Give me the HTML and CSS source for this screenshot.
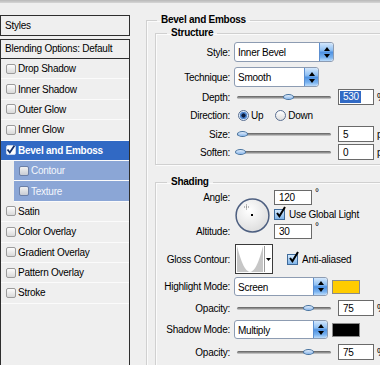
FILE: index.html
```html
<!DOCTYPE html>
<html lang="en">
<head>
  <meta charset="UTF-8">
  <title>Layer Style</title>
  <link rel="stylesheet" href="styles.css">
</head>
<body>
  <div class="topbar"></div>
  <div class="main">
    <div class="sidebar">
      <div class="styles-head">Styles</div>
      <div class="blend-head">Blending Options: Default</div>
      <ul class="fx-list">
        <li><span class="cb"></span>Drop Shadow</li>
        <li><span class="cb"></span>Inner Shadow</li>
        <li><span class="cb"></span>Outer Glow</li>
        <li><span class="cb"></span>Inner Glow</li>
        <li class="current"><span class="cb on"><svg width="10" height="10" viewBox="0 0 10 10"><path d="M1.5 4.5l2.3 3 4.7-7" stroke="#13306b" stroke-width="1.8" fill="none"/></svg></span>Bevel and Emboss</li>
        <li class="sub"><span class="cb"></span>Contour</li>
        <li class="sub"><span class="cb"></span>Texture</li>
        <li><span class="cb"></span>Satin</li>
        <li><span class="cb"></span>Color Overlay</li>
        <li><span class="cb"></span>Gradient Overlay</li>
        <li><span class="cb"></span>Pattern Overlay</li>
        <li><span class="cb"></span>Stroke</li>
      </ul>
    </div>

    <div class="panel">
      <fieldset class="group outer">
        <legend>Bevel and Emboss</legend>

        <fieldset class="group inner structure">
          <legend>Structure</legend>
          <div class="row r-style">
            <label class="lbl">Style:</label>
            <div class="select w100"><span class="val">Inner Bevel</span><span class="spin"><svg width="6" height="11" viewBox="0 0 6 11"><path d="M3 0L6 4H0Z M0 7H6L3 11Z" fill="#000"/></svg></span></div>
          </div>
          <div class="row r-tech">
            <label class="lbl">Technique:</label>
            <div class="select w85"><span class="val">Smooth</span><span class="spin"><svg width="6" height="11" viewBox="0 0 6 11"><path d="M3 0L6 4H0Z M0 7H6L3 11Z" fill="#000"/></svg></span></div>
          </div>
          <div class="row r-depth">
            <label class="lbl">Depth:</label>
            <div class="slider"><span class="thumb" style="left: 46px"></span></div>
            <span class="input depth"><span class="sel">530</span></span>
            <span class="unit">%</span>
          </div>
          <div class="row r-dir">
            <label class="lbl">Direction:</label>
            <span class="radio on"></span><span class="opt">Up</span>
            <span class="radio second"></span><span class="opt">Down</span>
          </div>
          <div class="row r-size">
            <label class="lbl">Size:</label>
            <div class="slider"><span class="thumb" style="left: 0px"></span></div>
            <span class="input">5</span>
            <span class="unit">px</span>
          </div>
          <div class="row r-soften">
            <label class="lbl">Soften:</label>
            <div class="slider"><span class="thumb" style="left: -2px"></span></div>
            <span class="input">0</span>
            <span class="unit">px</span>
          </div>
        </fieldset>

        <fieldset class="group inner shading">
          <legend>Shading</legend>
          <div class="angle-grid">
            <label class="lbl g-angle">Angle:</label>
            <div class="dial">
              <svg width="35" height="35" viewBox="0 0 35 35">
                <defs>
                  <radialGradient id="dialfill" cx="40%" cy="35%" r="70%">
                    <stop offset="0" stop-color="#ffffff"/>
                    <stop offset="1" stop-color="#dcdcdc"/>
                  </radialGradient>
                </defs>
                <circle cx="17.5" cy="17.5" r="16.4" fill="url(#dialfill)" stroke="#4d5f80" stroke-width="1.5"/>
                <path d="M11.5 6.5v5M9 9h5" stroke="#7a7a7a" stroke-width="1" stroke-dasharray="1 1"/>
                <rect x="16" y="16" width="2" height="2" fill="#000"/>
              </svg>
            </div>
            <div class="ctl g-angle"><span class="input w38">120</span><span class="deg">°</span></div>
            <div class="ctl g-global"><span class="check"><svg width="11" height="11" viewBox="0 0 11 11"><path d="M2 5l2.4 3.2L10 -1" stroke="#000" stroke-width="2" fill="none"/></svg></span><span class="opt">Use Global Light</span></div>
            <label class="lbl g-alt">Altitude:</label>
            <div class="ctl g-alt"><span class="input w38">30</span><span class="deg">°</span></div>
          </div>
          <div class="row r-gloss">
            <label class="lbl">Gloss Contour:</label>
            <div class="contour">
              <svg width="26" height="26" viewBox="0 0 26 26"><rect width="26" height="26" fill="#c6c6c6"/><path d="M0 0Q13 52 26 0Z" fill="#fff"/></svg>
              <span class="drop"><svg width="5" height="3" viewBox="0 0 5 3"><path d="M0 0H5L2.5 3Z" fill="#000"/></svg></span>
            </div>
            <span class="check aa"><svg width="11" height="11" viewBox="0 0 11 11"><path d="M2 5l2.4 3.2L10 -1" stroke="#000" stroke-width="2" fill="none"/></svg></span><span class="opt">Anti-aliased</span>
          </div>
          <div class="row r-mode">
            <label class="lbl">Highlight Mode:</label>
            <div class="select w94"><span class="val">Screen</span><span class="spin"><svg width="6" height="11" viewBox="0 0 6 11"><path d="M3 0L6 4H0Z M0 7H6L3 11Z" fill="#000"/></svg></span></div>
            <span class="swatch yellow"></span>
          </div>
          <div class="row r-op">
            <label class="lbl">Opacity:</label>
            <div class="slider"><span class="thumb" style="left: 66px"></span></div>
            <span class="input">75</span>
            <span class="unit">%</span>
          </div>
          <div class="row r-mode2">
            <label class="lbl">Shadow Mode:</label>
            <div class="select w94"><span class="val">Multiply</span><span class="spin"><svg width="6" height="11" viewBox="0 0 6 11"><path d="M3 0L6 4H0Z M0 7H6L3 11Z" fill="#000"/></svg></span></div>
            <span class="swatch black"></span>
          </div>
          <div class="row r-op2">
            <label class="lbl">Opacity:</label>
            <div class="slider"><span class="thumb" style="left: 66px"></span></div>
            <span class="input">75</span>
            <span class="unit">%</span>
          </div>
        </fieldset>
      </fieldset>
    </div>
  </div>
</body>
</html>
```

FILE: styles.css
```css
* {
  margin: 0;
  padding: 0;
  box-sizing: border-box;
}
body {
  width: 380px;
  height: 365px;
  overflow: hidden;
  background: #efefef;
  font-family: "Liberation Sans", Arial, sans-serif;
  font-size: 10px;
  letter-spacing: -0.25px;
  color: #000;
}
.topbar {
  height: 3px;
  background: linear-gradient(#b8b8b8, #d6d6d6);
}
.main {
  display: flex;
  height: 362px;
}

/* left list */
.sidebar {
  width: 130px;
  flex: none;
  padding-top: 12px;
  display: flex;
  flex-direction: column;
}
.styles-head {
  height: 21px;
  border: 1px solid #2e2e2e;
  padding-left: 4px;
  line-height: 19px;
}
.blend-head {
  margin-top: 3px;
  height: 20px;
  border: 1px solid #2e2e2e;
  padding-left: 4px;
  line-height: 18px;
}
.fx-list {
  list-style: none;
  flex: 1;
  border: 1px solid #2e2e2e;
  border-top: 0;
  border-bottom: 0;
}
.fx-list li {
  height: 20.4px;
  border-bottom: 1px solid #fbfbfb;
  display: flex;
  align-items: center;
  padding-left: 5px;
}
.fx-list li.current {
  background: #3169c4;
  color: #fff;
  font-weight: bold;
}
.fx-list li.sub {
  margin-left: 13px;
  padding-left: 5px;
  background: #8ba6d6;
  color: #f4f7fc;
}
.cb {
  width: 10px;
  height: 10px;
  margin-right: 2px;
  border: 1px solid #9b9b9b;
  border-radius: 2px;
  background: linear-gradient(#fdfdfd, #d9d9d9);
  flex: none;
}
.cb.on {
  background: #fff;
  border-color: #c8d6ee;
}
.cb svg {
  display: block;
  margin: -1px 0 0 -1px;
}
.sub .cb {
  border-color: #6b7fa6;
  background: linear-gradient(#f2f2f2, #c8ccd4);
}

/* right panel */
.panel {
  flex: 1;
  overflow: hidden;
  padding: 11px 0 0 16px;
}
.group {
  border: 1px solid #d0d0d0;
  box-shadow: inset 1px 1px 0 #fbfbfb, 1px 1px 0 #fbfbfb;
  min-width: 0;
}
.group legend {
  font-weight: bold;
  line-height: 12px;
  padding: 0 4px;
  margin-left: 10px;
}
.outer {
  width: 270px;
  height: 420px;
}
.inner {
  margin-left: 8px;
  width: 250px;
}
.inner legend {
  margin-left: 11px;
}
.structure {
  margin-top: 1px;
  padding-bottom: 4px;
}
.shading {
  margin-top: 11px;
  height: 200px;
}

.row {
  display: flex;
  align-items: center;
}
.lbl {
  width: 74px;
  margin-right: 4px;
  text-align: right;
  flex: none;
}
.r-style { margin-top: 3px; height: 20px; }
.r-tech { margin-top: 5px; height: 20px; }
.r-depth { margin-top: 2px; height: 16px; }
.r-dir { margin-top: 3px; height: 14px; }
.r-size { margin-top: 4px; height: 16px; }
.r-soften { margin-top: 2px; height: 16px; }

/* dropdowns */
.select {
  display: flex;
  height: 20px;
  border: 1px solid #8d9cb2;
  border-radius: 3px;
  background: #fff;
  overflow: hidden;
}
.r-mode .select, .r-mode2 .select {
  height: 19px;
}
.w100 { width: 100px; }
.w85 { width: 85px; }
.w94 { width: 94px; }
.select .val {
  flex: 1;
  padding-left: 3px;
  padding-top: 1px;
  display: flex;
  align-items: center;
}
.select .spin {
  width: 14px;
  border-left: 1px solid #5c8fd0;
  border-radius: 0 2px 2px 0;
  background: linear-gradient(#d3e7fc, #8fc0f3 40%, #4f92e2 52%, #79b2ef 80%, #bcdcfb);
  display: flex;
  align-items: center;
  justify-content: center;
}

/* sliders and fields */
.slider {
  position: relative;
  width: 94px;
  height: 16px;
  margin-left: 3px;
}
.slider::before {
  content: "";
  position: absolute;
  left: 0;
  right: 0;
  top: 7px;
  height: 3px;
  border-radius: 2px;
  background: linear-gradient(#5f5f5f, #9a9a9a 60%, #d9d9d9);
}
.thumb {
  position: absolute;
  top: 5px;
  width: 11px;
  height: 6px;
  border: 1px solid #46729f;
  border-radius: 50%;
  background: linear-gradient(#e4f0fd, #8ab6e9);
}
.input {
  width: 36px;
  height: 16px;
  margin-left: 7px;
  padding-left: 4px;
  border: 1px solid #6a6a6a;
  background: #fff;
  display: flex;
  align-items: center;
  flex: none;
}
.input.depth {
  padding-left: 1px;
}
.sel {
  background: #316ac5;
  color: #fff;
  padding: 1px 2px 1px 3px;
  line-height: 10px;
}
.unit {
  margin-left: 3px;
}

/* radios */
.radio {
  width: 11px;
  height: 11px;
  border: 1px solid #5a6f92;
  border-radius: 50%;
  background: linear-gradient(#ffffff, #dedede);
  margin-left: 4px;
  flex: none;
}
.radio.on {
  background: radial-gradient(circle, #0c1d3f 0 1.8px, #4f86d0 2.4px 3.4px, #d9e8f8 4px);
}
.radio.second {
  margin-left: 12px;
}
.opt {
  margin-left: 2px;
}

/* angle block */
.angle-grid {
  display: grid;
  grid-template-columns: 78px 40px auto;
  grid-template-rows: 15px 15px 15px;
  row-gap: 2px;
  margin-top: 2px;
}
.angle-grid .lbl {
  align-self: center;
}
.g-angle { grid-row: 1; }
.g-global { grid-row: 2; grid-column: 3; }
.g-alt { grid-row: 3; }
.angle-grid .ctl {
  grid-column: 3;
  display: flex;
  align-items: center;
}
.dial {
  grid-column: 2;
  grid-row: 1 / span 3;
  margin: 8px 0 0 1px;
  width: 35px;
  height: 35px;
}
.dial svg {
  display: block;
}
.input.w38 {
  width: 38px;
  height: 15px;
  margin-left: 0;
}
.deg {
  align-self: flex-start;
  margin-left: 3px;
  margin-top: -3px;
}
.check {
  width: 11px;
  height: 11px;
  border: 1px solid #3e6a9a;
  background: linear-gradient(#d4e9fc, #80b5ea);
  flex: none;
}
.check svg {
  display: block;
  margin: -2px 0 0 0;
  overflow: visible;
}
.g-global .opt {
  margin-left: 4px;
}

.r-gloss {
  margin-top: 5px;
  height: 30px;
}
.contour {
  display: flex;
  width: 38px;
  height: 30px;
  margin-left: 1px;
  padding: 1px 0 1px 1px;
  border: 1px solid #3a3a3a;
  background: #fff;
}
.contour svg {
  display: block;
}
.contour .drop {
  flex: 1;
  margin-left: 1px;
  border-left: 1px solid #9a9a9a;
  display: flex;
  align-items: center;
  justify-content: center;
}
.check.aa {
  margin-left: 14px;
}
.r-gloss .opt {
  margin-left: 4px;
}

.r-mode { margin-top: 3px; height: 19px; }
.r-op { margin-top: 4px; height: 16px; }
.r-mode2 { margin-top: 4px; height: 19px; }
.r-op2 { margin-top: 5px; height: 16px; }
.swatch {
  width: 28px;
  height: 14px;
  margin-left: 4px;
  border: 1px solid #8a8a8a;
}
.swatch.yellow { background: #ffcc00; }
.swatch.black { background: #000; }
```
